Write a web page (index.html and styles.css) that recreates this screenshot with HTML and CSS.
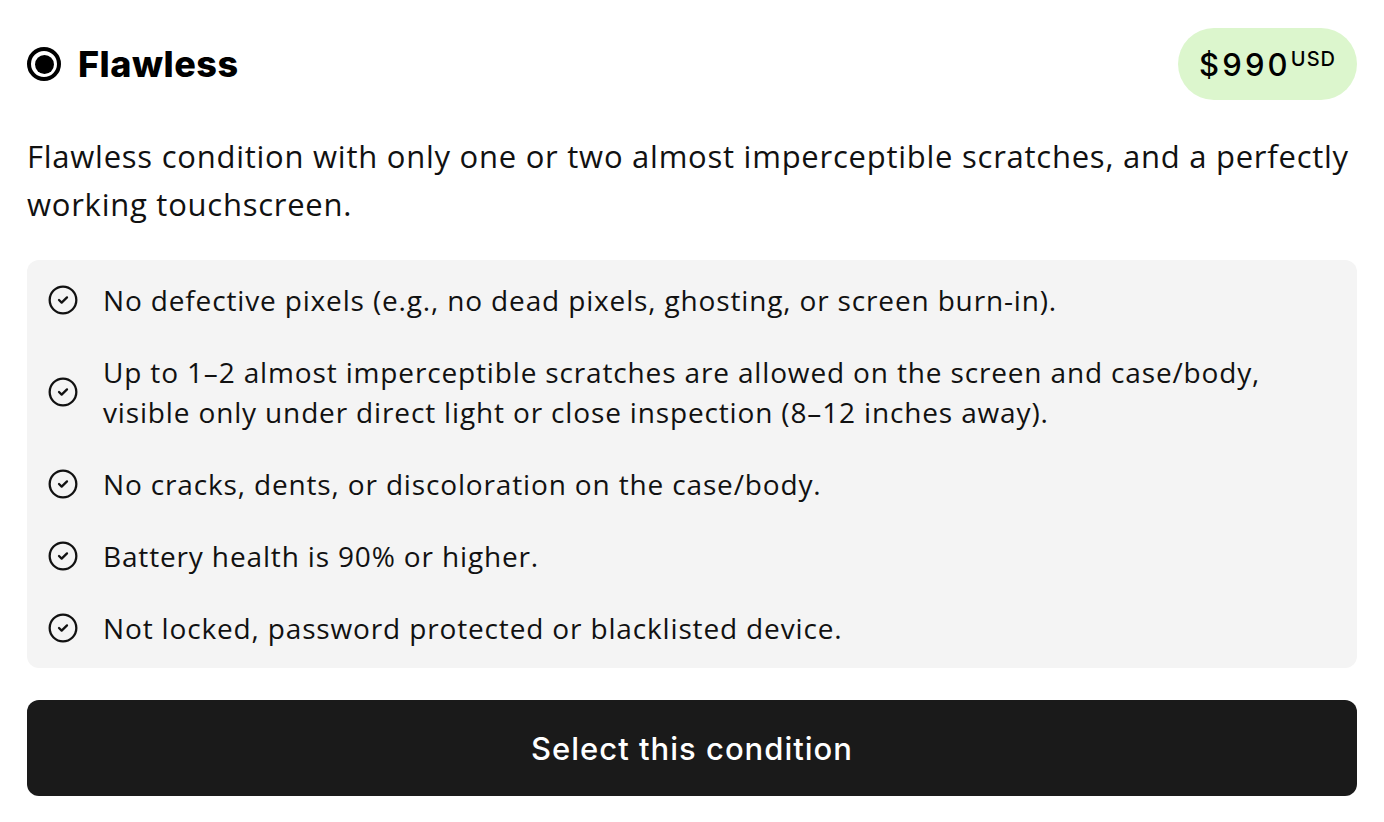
FILE: index.html
```html
<!DOCTYPE html>
<html lang="en">
<head>
<meta charset="utf-8">
<title>Flawless</title>
<link rel="stylesheet" href="styles.css">
</head>
<body>
<div class="card">
  <div class="header">
    <div class="title">
      <span class="radio"><span class="dot"></span></span>
      <h2 class="name">Flawless</h2>
    </div>
    <div class="price"><span class="amount">$990</span><span class="currency">USD</span></div>
  </div>
  <p class="desc">Flawless condition with only one or two almost imperceptible scratches, and a perfectly working touchscreen.</p>
  <ul class="list">
    <li class="item"><svg class="check" viewBox="0 0 24 24"><circle cx="12" cy="12" r="10"/><path d="m9 12 2 2 4-4"/></svg><span>No defective pixels (e.g., no dead pixels, ghosting, or screen burn-in).</span></li>
    <li class="item"><svg class="check" viewBox="0 0 24 24"><circle cx="12" cy="12" r="10"/><path d="m9 12 2 2 4-4"/></svg><span>Up to 1–2 almost imperceptible scratches are allowed on the screen and case/body,<br>visible only under direct light or close inspection (8–12 inches away).</span></li>
    <li class="item"><svg class="check" viewBox="0 0 24 24"><circle cx="12" cy="12" r="10"/><path d="m9 12 2 2 4-4"/></svg><span>No cracks, dents, or discoloration on the case/body.</span></li>
    <li class="item"><svg class="check" viewBox="0 0 24 24"><circle cx="12" cy="12" r="10"/><path d="m9 12 2 2 4-4"/></svg><span>Battery health is 90% or higher.</span></li>
    <li class="item"><svg class="check" viewBox="0 0 24 24"><circle cx="12" cy="12" r="10"/><path d="m9 12 2 2 4-4"/></svg><span>Not locked, password protected or blacklisted device.</span></li>
  </ul>
  <button class="select">Select this condition</button>
</div>
</body>
</html>
```
FILE: styles.css
```css
* { box-sizing: border-box; }
html, body { margin: 0; padding: 0; background: #fff; }
body { font-family: "Open Sans", "Noto Sans", sans-serif; color: #111; }
.card {
  padding: 28px 27px;
  display: flex;
  flex-direction: column;
  gap: 32px;
}
.header {
  display: flex;
  justify-content: space-between;
  align-items: center;
  height: 72px;
}
.title { display: flex; align-items: center; gap: 17px; }
.radio {
  width: 34px; height: 34px;
  border: 4px solid #000;
  border-radius: 50%;
  display: flex; align-items: center; justify-content: center;
}
.dot { width: 19px; height: 19px; background: #000; border-radius: 50%; }
.name {
  margin: 0;
  font-family: "Inter", sans-serif;
  font-weight: 800;
  font-size: 36px;
  letter-spacing: 0.5px;
  color: #000;
}
.price {
  height: 72px;
  padding: 0 21px;
  border-radius: 36px;
  background: #dcf6cd;
  display: flex;
  align-items: center;
  font-family: "Inter", sans-serif;
  color: #000;
}
.amount { font-size: 31px; font-weight: 500; letter-spacing: 3.2px; }
.currency { font-size: 20px; font-weight: 500; align-self: flex-start; margin-top: 19px; letter-spacing: 1px; }
.desc {
  margin: 0;
  font-size: 31px;
  line-height: 48px;
  letter-spacing: 0.75px;
  color: #111;
}
.list {
  margin: 0;
  list-style: none;
  background: #f4f4f4;
  border-radius: 12px;
  padding: 20px 20px;
  display: flex;
  flex-direction: column;
  gap: 32px;
}
.item {
  display: flex;
  align-items: center;
  gap: 24px;
  font-size: 28px;
  line-height: 40px;
  letter-spacing: 0.85px;
  color: #111;
}
.check {
  width: 32px; height: 32px; flex: none;
  fill: none; stroke: #111; stroke-width: 1.7;
  stroke-linecap: round; stroke-linejoin: round;
}
.select {
  height: 96px;
  border: none;
  border-radius: 12px;
  background: #1a1a1a;
  color: #fff;
  font-family: "Inter", sans-serif;
  font-size: 31px;
  font-weight: 500;
  letter-spacing: 1px;
  cursor: pointer;
}
```
